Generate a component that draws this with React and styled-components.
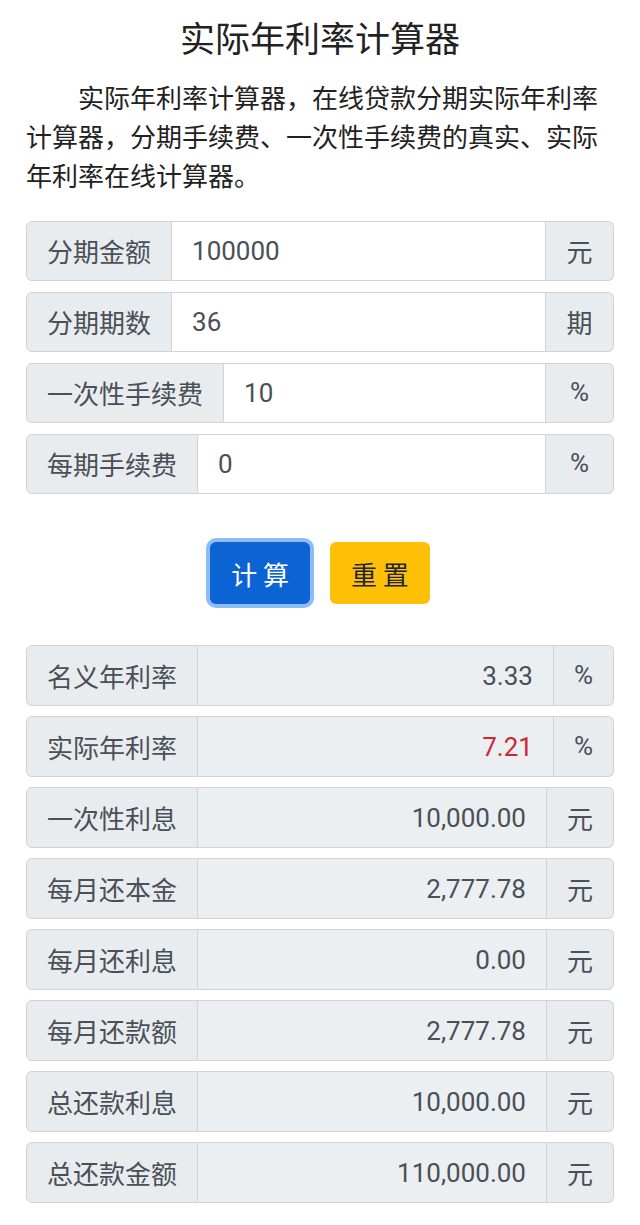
import React from 'react';
import styled, { createGlobalStyle } from 'styled-components';

const GlobalStyle = createGlobalStyle`
  html, body {
    margin: 0;
    padding: 0;
    background: #fff;
  }
  body {
    font-family: Roboto, "Noto Sans CJK SC", "Noto Sans", sans-serif;
    color: #212529;
  }
  * {
    box-sizing: border-box;
  }
`;

const cjk = `"Noto Sans CJK SC", Roboto, sans-serif`;

const Page = styled.div`
  width: 640px;
  padding: 12px 26px 20px;
`;

const Title = styled.h1`
  margin: 0;
  font-family: ${cjk};
  font-size: 35px;
  line-height: 50px;
  font-weight: 400;
  text-align: center;
  color: #222;
`;

const Intro = styled.p`
  margin: 15px 0 27px;
  font-family: ${cjk};
  font-size: 26px;
  line-height: 39px;
  text-indent: 2em;
  color: #222;
`;

const Group = styled.div`
  display: flex;
  height: ${p => (p.result ? '61px' : '60px')};
  margin-bottom: ${p => (p.result ? '10px' : '11px')};
  font-size: 26px;
`;

const Addon = styled.span`
  display: flex;
  align-items: center;
  justify-content: center;
  flex-shrink: 0;
  padding: 0 20px;
  min-width: ${p => (p.fixed ? '68px' : 'auto')};
  font-family: ${p => (p.latin ? 'Roboto, sans-serif' : cjk)};
  line-height: 1.2;
  background: #e9ecef;
  border: 1px solid #ced4da;
  color: #495057;
  white-space: nowrap;

  &:first-child {
    border-radius: 6px 0 0 6px;
  }
  &:last-child {
    border-radius: 0 6px 6px 0;
    border-left: none;
  }
`;

const Field = styled.input`
  flex: 1;
  min-width: 0;
  padding: 0 20px;
  border: 1px solid #ced4da;
  border-left: none;
  font-family: Roboto, sans-serif;
  font-size: 26px;
  color: ${p => (p.danger ? '#d0262e' : '#495057')};
  background: ${p => (p.readOnly ? '#eceff2' : '#fff')};
  text-align: ${p => (p.readOnly ? 'right' : 'left')};
  outline: none;
`;

const Actions = styled.div`
  display: flex;
  justify-content: center;
  gap: 20px;
  margin: 48px 0 41px;
`;

const Button = styled.button`
  height: 62px;
  padding: 0 21px;
  border: none;
  border-radius: 6px;
  font-family: ${cjk};
  font-size: 26px;
  cursor: pointer;
  background: ${p => (p.primary ? '#0b63d4' : '#ffc107')};
  color: ${p => (p.primary ? '#fff' : '#212529')};
  box-shadow: ${p => (p.primary ? '0 0 0 4px #8dbcf6' : 'none')};
`;

const inputs = [
  { label: '分期金额', value: '100000', unit: '元' },
  { label: '分期期数', value: '36', unit: '期' },
  { label: '一次性手续费', value: '10', unit: '%' },
  { label: '每期手续费', value: '0', unit: '%' },
];

const results = [
  { label: '名义年利率', value: '3.33', unit: '%' },
  { label: '实际年利率', value: '7.21', unit: '%', danger: true },
  { label: '一次性利息', value: '10,000.00', unit: '元' },
  { label: '每月还本金', value: '2,777.78', unit: '元' },
  { label: '每月还利息', value: '0.00', unit: '元' },
  { label: '每月还款额', value: '2,777.78', unit: '元' },
  { label: '总还款利息', value: '10,000.00', unit: '元' },
  { label: '总还款金额', value: '110,000.00', unit: '元' },
];

export default function App() {
  return (
    <>
      <GlobalStyle />
      <Page>
        <Title>实际年利率计算器</Title>
        <Intro>
          实际年利率计算器，在线贷款分期实际年利率计算器，分期手续费、一次性手续费的真实、实际年利率在线计算器。
        </Intro>

        {inputs.map(row => (
          <Group key={row.label}>
            <Addon>{row.label}</Addon>
            <Field type="text" defaultValue={row.value} />
            <Addon fixed latin={row.unit === '%'}>{row.unit}</Addon>
          </Group>
        ))}

        <Actions>
          <Button primary>计 算</Button>
          <Button>重 置</Button>
        </Actions>

        {results.map(row => (
          <Group result key={row.label}>
            <Addon>{row.label}</Addon>
            <Field readOnly danger={row.danger} value={row.value} />
            <Addon latin={row.unit === '%'}>{row.unit}</Addon>
          </Group>
        ))}
      </Page>
    </>
  );
}
